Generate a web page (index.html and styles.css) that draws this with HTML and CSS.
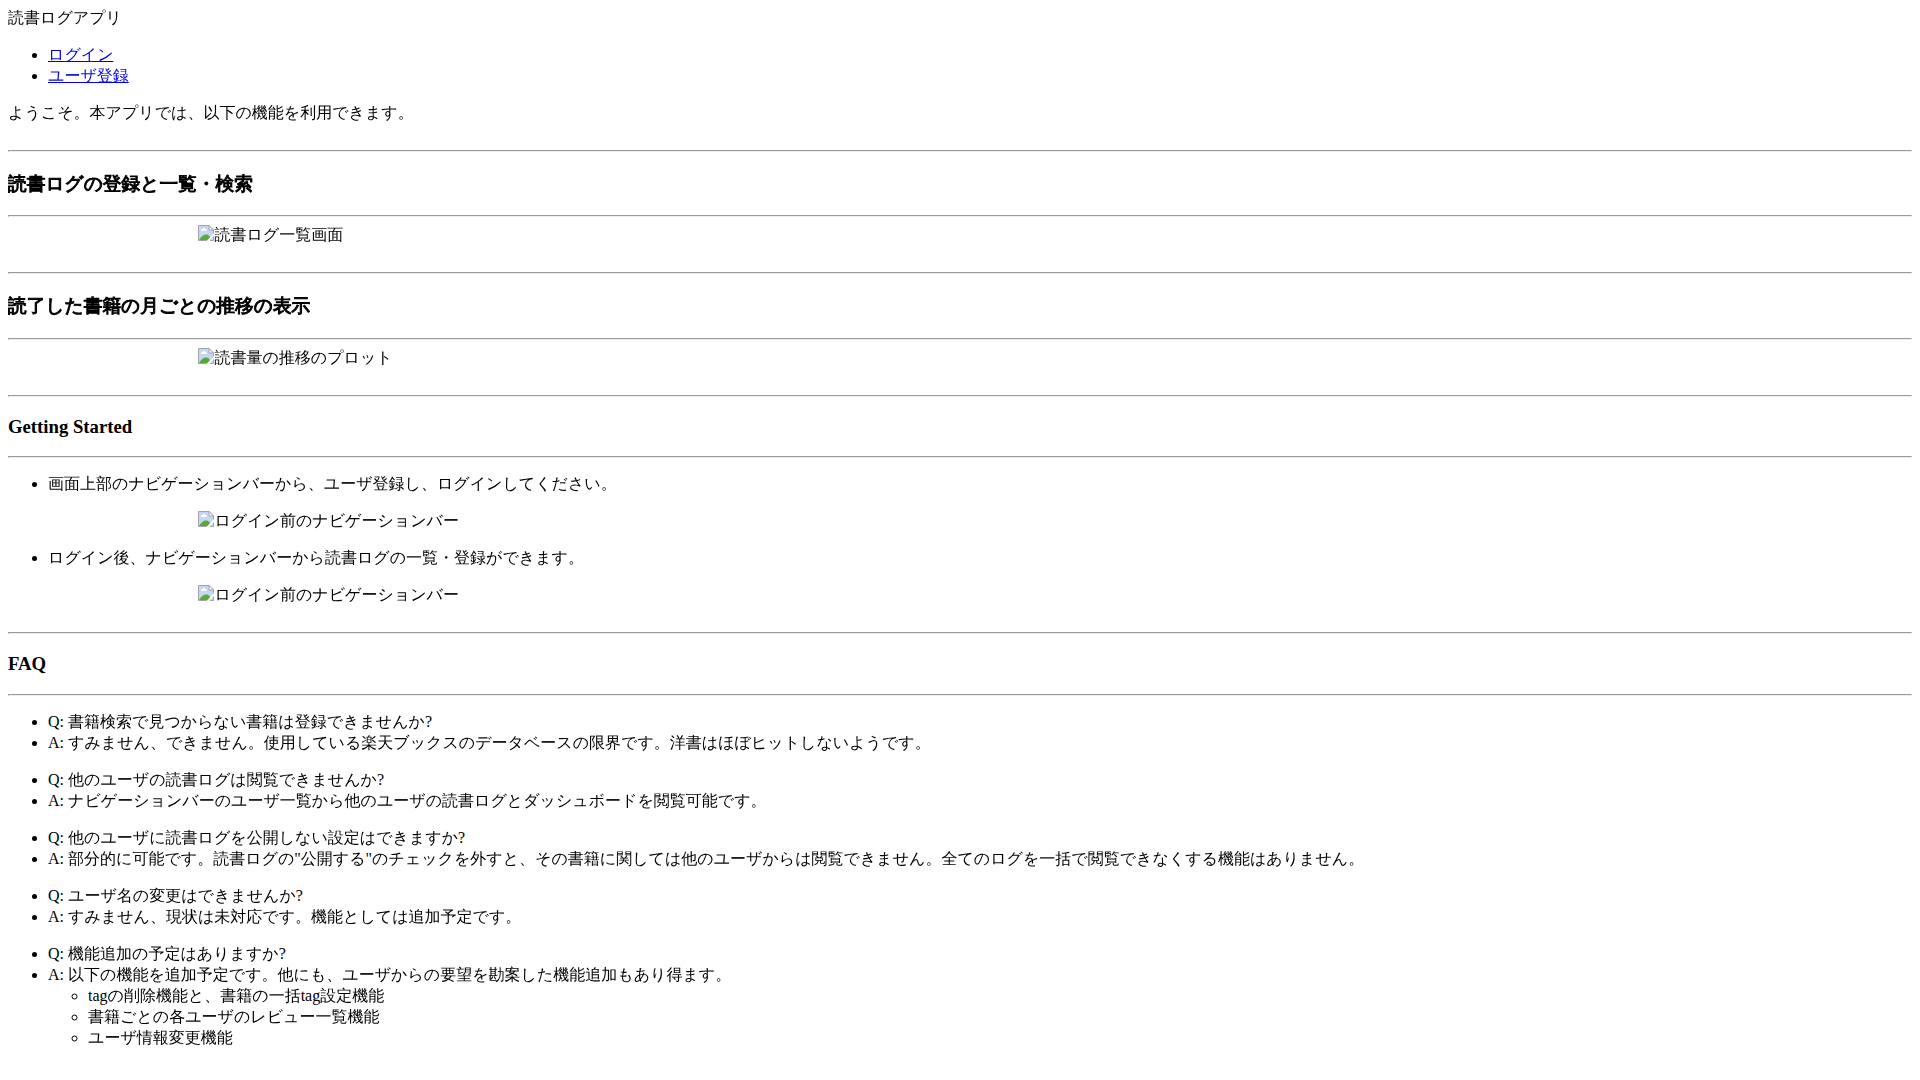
FILE: index.html
```html
<!DOCTYPE html>
<html>
<head>
    <meta charset="UTF-8">
    <meta name="viewport" content="width=device-width, initial-scale=1.0">
    <title>読書ログアプリ</title>
    <link rel="stylesheet" href="styles.css">
</head>
<body>
    <svg class="icon-defs" aria-hidden="true">
        <symbol id="no-image" viewBox="0 0 16 16">
            <path d="M0.5 0.5H11L15.5 5V15.5H0.5Z" fill="#c6d6f7" stroke="#a3a3a3"/>
            <path d="M3 6a1.6 1.6 0 0 1 1.4-2 1.8 1.8 0 0 1 3.2 0A1.3 1.3 0 0 1 8.5 6Z" fill="#fff"/>
            <path d="M1 15C3 11.500 5.500 9.500 8 9.500S12 11 13 15Z" fill="#56ab32"/>
            <path d="M8.500 16L16 8V11L11.500 16Z" fill="#fff"/>
            <path d="M11 0.500V5H15.500Z" fill="#fff" stroke="#a3a3a3"/>
        </symbol>
    </svg>

    <header>
        <div>読書ログアプリ</div>
        <nav>
            <ul>
                <li><a href="/login">ログイン</a></li>
                <li><a href="/signup">ユーザ登録</a></li>
            </ul>
        </nav>
    </header>

    <main>
        <div class="section">ようこそ。本アプリでは、以下の機能を利用できます。</div>

        <div class="section">
            <hr>
            <h3 class="title-ja">読書ログの登録と一覧・検索</h3>
            <hr>
            <div class="picture"><svg class="icon"><use href="#no-image"/></svg>読書ログ一覧画面</div>
        </div>

        <div class="section">
            <hr>
            <h3 class="title-ja">読了した書籍の月ごとの推移の表示</h3>
            <hr>
            <div class="picture"><svg class="icon"><use href="#no-image"/></svg>読書量の推移のプロット</div>
        </div>

        <div class="section">
            <hr>
            <h3>Getting Started</h3>
            <hr>
            <ul>
                <li>画面上部のナビゲーションバーから、ユーザ登録し、ログインしてください。</li>
            </ul>
            <div class="picture"><svg class="icon"><use href="#no-image"/></svg>ログイン前のナビゲーションバー</div>
            <ul>
                <li>ログイン後、ナビゲーションバーから読書ログの一覧・登録ができます。</li>
            </ul>
            <div class="picture"><svg class="icon"><use href="#no-image"/></svg>ログイン前のナビゲーションバー</div>
        </div>

        <div class="section">
            <hr>
            <h3>FAQ</h3>
            <hr>
            <ul>
                <li>Q: 書籍検索で見つからない書籍は登録できませんか?</li>
                <li>A: すみません、できません。使用している楽天ブックスのデータベースの限界です。洋書はほぼヒットしないようです。</li>
            </ul>
            <ul>
                <li>Q: 他のユーザの読書ログは閲覧できませんか?</li>
                <li>A: ナビゲーションバーのユーザ一覧から他のユーザの読書ログとダッシュボードを閲覧可能です。</li>
            </ul>
            <ul>
                <li>Q: 他のユーザに読書ログを公開しない設定はできますか?</li>
                <li>A: 部分的に可能です。読書ログの"公開する"のチェックを外すと、その書籍に関しては他のユーザからは閲覧できません。全てのログを一括で閲覧できなくする機能はありません。</li>
            </ul>
            <ul>
                <li>Q: ユーザ名の変更はできませんか?</li>
                <li>A: すみません、現状は未対応です。機能としては追加予定です。</li>
            </ul>
            <ul>
                <li>Q: 機能追加の予定はありますか?</li>
                <li>A: 以下の機能を追加予定です。他にも、ユーザからの要望を勘案した機能追加もあり得ます。
                    <ul>
                        <li>tagの削除機能と、書籍の一括tag設定機能</li>
                        <li>書籍ごとの各ユーザのレビュー一覧機能</li>
                        <li>ユーザ情報変更機能</li>
                    </ul>
                </li>
            </ul>
        </div>
    </main>
</body>
</html>
```
FILE: styles.css
```css
body {
    margin: 8px;
    font-family: "Liberation Serif", "WenQuanYi Zen Hei", "Noto Sans CJK JP", serif;
}
.icon-defs {
    display: none;
}
hr {
    margin: 8px 0;
}
/* the Japanese face has no bold weight */
.title-ja {
    -webkit-text-stroke: 1px #000;
}
.section {
    margin-bottom: 26px;
}
.picture {
    margin-left: 10%;
}
.icon {
    width: 16px;
    height: 16px;
    vertical-align: -1px;
}
```
